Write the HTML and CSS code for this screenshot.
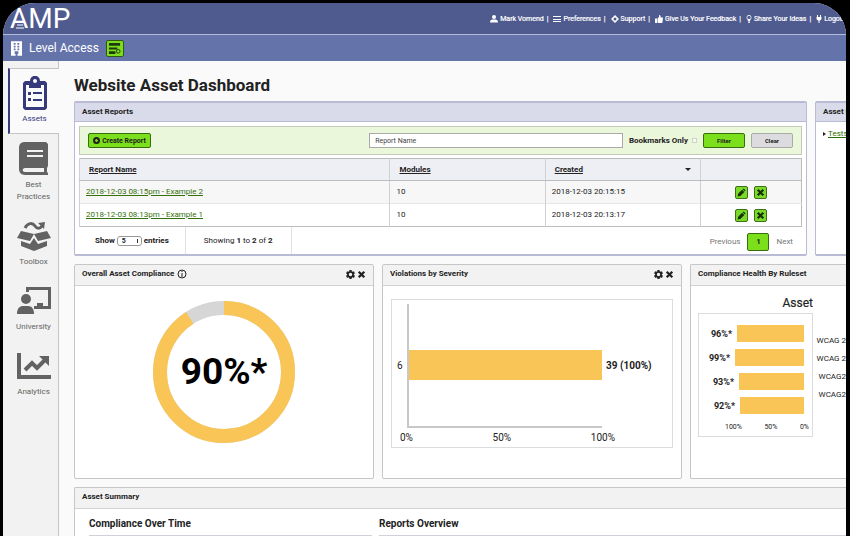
FILE: index.html
```
<!DOCTYPE html>
<html lang="en">
    <head>
        <meta charset="utf-8">
        <title>AMP - Website Asset Dashboard</title>
        <link rel="stylesheet" href="styles.css">
    </head>
    <body>
        <svg class="sprite" width="0" height="0">
            <symbol id="gear" viewBox="0 0 16 16">
                <path fill-rule="evenodd" d="M6 0h4v2l2 1 2-1 2 4-2 1v2l2 1-2 4-2-1-2 1v2H6v-2l-2-1-2 1-2-4 2-1V7L0 6l2-4 2 1 2-1zM8 5a3 3 0 1 0 0 6 3 3 0 0 0 0-6z"/>
            </symbol>
            <symbol id="cross" viewBox="0 0 16 16">
                <path d="M3 3l10 10M13 3L3 13" stroke="currentColor" stroke-width="4"/>
            </symbol>
            <symbol id="pencil" viewBox="0 0 16 16">
                <path d="M1 15l1-5 7-7 4 4-7 7zM10 2l2-1 3 3-1 2z"/>
            </symbol>
        </svg>
        <div class="frame">
            <header class="topbar">
                <div class="logo">AMP
                    <svg viewBox="0 0 8 8"><path d="M2 1h4M1 4h6M0 7h8"/></svg>
                </div>
                <nav class="user-nav">
                    <a href="#"><svg viewBox="0 0 16 16"><circle cx="8" cy="4" r="4"/><path d="M0 15c0-5 3-6 8-6s8 1 8 6z"/></svg>Mark Vomend</a>
                    <a href="#"><svg viewBox="0 0 16 16" shape-rendering="crispEdges"><path d="M0 2h16v2H0zM0 7h16v2H0zM0 12h16v2H0z"/></svg>Preferences</a>
                    <a href="#"><svg viewBox="0 0 16 16"><path fill-rule="evenodd" d="M8 0l3 3 2 2 3 3-3 3-2 2-3 3-3-3-2-2-3-3 3-3 2-2zM8 5a3 3 0 1 0 0 6 3 3 0 0 0 0-6z"/></svg>Support</a>
                    <a href="#"><svg viewBox="0 0 16 16"><path d="M0 7h4v9H0zM5 7l3-3V0c3 0 4 2 3 5h5l-1 10-2 1H7l-2-1z"/></svg>Give Us Your Feedback</a>
                    <a href="#"><svg class="thin" viewBox="0 0 10 16"><path fill-rule="evenodd" d="M5 0a5 5 0 0 1 3 9l-1 3H3L2 9a5 5 0 0 1 3-9zM5 2a3 3 0 0 0-1 6h2a3 3 0 0 0-1-6zM3 13h4v1l-1 2H4l-1-2z"/></svg>Share Your Ideas</a>
                    <a href="#"><svg class="thin" viewBox="0 0 10 16"><path d="M1 0h2v4h4V0h2v4h1v3c0 2-2 4-4 4v5H4v-5c-2 0-4-2-4-4V4h1z"/></svg>Logout</a>
                </nav>
            </header>
            <div class="subbar">
                <svg class="building" viewBox="0 0 12 16"><path fill-rule="evenodd" d="M0 0h12v14h-1H8v-3H4v3H0zM3 2v2h2V2zM7 2v2h2V2zM3 5v2h2V5zM7 5v2h2V5zM3 8v2h2V8zM7 8v2h2V8zM0 14h5v2H0zM7 14h5v2H7z"/></svg>
                <span>Level Access</span>
                <button class="org-button" aria-label="Switch organization">
                    <svg viewBox="0 0 14 14"><path d="M1 1h12v3H1zM1 6h9v2H1zM1 10h7v3H1z"/><circle cx="11" cy="10" r="2" fill="none" stroke="currentColor"/></svg>
                </button>
            </div>
            <div class="body">
                <nav class="sidebar">
                    <a class="side-item active" href="#">
                        <span class="side-icon"><svg width="26" height="34" viewBox="0 0 26 34"><path fill-rule="evenodd" d="M3 5h5c0-7 10-7 10 0h5l2 2v25l-2 2H3l-2-2V7zM4 9v22h18V9h-3v3H7V9zM13 3a2 2 0 1 0 0 4 2 2 0 0 0 0-4z"/><path d="M6 16h3v3H6zM11 16h9v2h-9zM6 22h3v3H6zM11 23h9v2h-9z"/></svg></span>
                        Assets
                    </a>
                    <a class="side-item" href="#">
                        <span class="side-icon"><svg width="30" height="34" viewBox="0 0 30 34"><path fill-rule="evenodd" d="M6 0h21l2 2v22l-1 2v4l1 1v2H6c-4 0-6-3-6-6V6c0-4 2-6 6-6zM8 8v2h16V8zM8 13v2h16v-2zM6 26c-3 0-3 4 0 4h19v-4z"/></svg></span>
                        Best Practices
                    </a>
                    <a class="side-item" href="#">
                        <span class="side-icon"><svg width="34" height="30" viewBox="0 0 34 30"><path d="M8 7c3-6 8-5 10-2s5 3 7 0" fill="none" stroke="currentColor" stroke-width="3"/><path d="M21 2l7-1-1 7zM4 10l13 3-4 7L0 17zM30 10l-13 3 4 7 13-3zM4 20l9 3 4-6 4 6 9-3v5l-13 5-13-5z"/></svg></span>
                        Toolbox
                    </a>
                    <a class="side-item" href="#">
                        <span class="side-icon"><svg width="34" height="28" viewBox="0 0 34 28"><circle cx="9" cy="12" r="5"/><path d="M0 27c0-6 3-8 6-8h5c4 0 6 3 6 8zM9 0h25v22H17v-3h3v-3h6v3h5V3H12v2H9z"/></svg></span>
                        University
                    </a>
                    <a class="side-item" href="#">
                        <span class="side-icon"><svg width="34" height="26" viewBox="0 0 34 26"><path d="M0 0h4v22h30v4H0z"/><path d="M8 17l7-7 5 5 8-8" fill="none" stroke="currentColor" stroke-width="4"/><path d="M22 3h10v10z"/></svg></span>
                        Analytics
                    </a>
                </nav>
                <main class="main">
                    <h1>Website Asset Dashboard</h1>
                    <div class="reports-row">
                        <section class="panel primary">
                            <h2>Asset Reports</h2>
                            <div class="panel-body">
                                <form class="filter-bar">
                                    <button type="button" class="btn green create"><svg viewBox="0 0 16 16"><path fill-rule="evenodd" d="M8 0a8 8 0 1 0 0 16A8 8 0 0 0 8 0zM8 4l2 2 2 2-2 2-2 2-4-4z"/></svg>Create Report</button>
                                    <input type="text" class="report-name" placeholder="Report Name" aria-label="Report Name">
                                    <label class="bookmarks">Bookmarks Only <input type="checkbox"></label>
                                    <button type="button" class="btn green">Filter</button>
                                    <button type="reset" class="btn">Clear</button>
                                </form>
                                <table class="reports">
                                    <colgroup>
                                        <col class="col-name"><col class="col-modules"><col class="col-created"><col>
                                    </colgroup>
                                    <thead>
                                        <tr>
                                            <th><u>Report Name</u></th>
                                            <th><u>Modules</u></th>
                                            <th><div class="sorted"><u>Created</u><i class="caret"></i></div></th>
                                            <th></th>
                                        </tr>
                                    </thead>
                                    <tbody>
                                        <tr>
                                            <td class="name"><a href="#">2018-12-03 08:15pm - Example 2</a></td>
                                            <td>10</td>
                                            <td>2018-12-03 20:15:15</td>
                                            <td>
                                                <div class="actions">
                                                    <button aria-label="Edit"><svg><use href="#pencil"/></svg></button>
                                                    <button aria-label="Delete"><svg><use href="#cross"/></svg></button>
                                                </div>
                                            </td>
                                        </tr>
                                        <tr>
                                            <td class="name"><a href="#">2018-12-03 08:13pm - Example 1</a></td>
                                            <td>10</td>
                                            <td>2018-12-03 20:13:17</td>
                                            <td>
                                                <div class="actions">
                                                    <button aria-label="Edit"><svg><use href="#pencil"/></svg></button>
                                                    <button aria-label="Delete"><svg><use href="#cross"/></svg></button>
                                                </div>
                                            </td>
                                        </tr>
                                    </tbody>
                                </table>
                                <div class="table-footer">
                                    <label class="length">Show <select><option>5</option><option>10</option></select> entries</label>
                                    <div class="info">Showing <b>1</b> to <b>2</b> of <b>2</b></div>
                                    <div class="pager">
                                        <a href="#">Previous</a>
                                        <button class="page">1</button>
                                        <a href="#">Next</a>
                                    </div>
                                </div>
                            </div>
                        </section>
                        <section class="panel primary cut">
                            <h2>Asset Menu</h2>
                            <div class="menu"><i></i><a href="#">Tests</a></div>
                        </section>
                    </div>
                    <div class="widgets">
                        <section class="panel">
                            <h2>Overall Asset Compliance
                                <svg class="info-icon" viewBox="0 0 10 10"><circle cx="5" cy="5" r="4"/><path d="M5 2v1M5 4v4"/></svg>
                                <span class="tools">
                                    <button aria-label="Settings"><svg><use href="#gear"/></svg></button>
                                    <button aria-label="Close"><svg><use href="#cross"/></svg></button>
                                </span>
                            </h2>
                            <div class="donut">
                                <svg viewBox="0 0 142 142">
                                    <circle class="track" cx="71" cy="71" r="64"/>
                                    <circle class="value" cx="71" cy="71" r="64" pathLength="100" stroke-dasharray="91 9"/>
                                </svg>
                                <strong>90%*</strong>
                            </div>
                        </section>
                        <section class="panel">
                            <h2>Violations by Severity
                                <span class="tools">
                                    <button aria-label="Settings"><svg><use href="#gear"/></svg></button>
                                    <button aria-label="Close"><svg><use href="#cross"/></svg></button>
                                </span>
                            </h2>
                            <div class="severity">
                                <div class="plot">
                                    <span>6</span>
                                    <div class="axes"><div class="bar" style="width: 100%"></div></div>
                                    <b>39 (100%)</b>
                                </div>
                                <div class="ticks"><span>0%</span><span>50%</span><span>100%</span></div>
                            </div>
                        </section>
                        <section class="panel cut">
                            <h2>Compliance Health By Ruleset</h2>
                            <div class="ruleset">
                                <div class="ruleset-chart">
                                    <h4>Asset</h4>
                                    <div class="ruleset-box">
                                        <div class="row"><b>96%*</b><div class="bar" style="width: 67px"></div></div>
                                        <div class="row"><b>99%*</b><div class="bar" style="width: 69px"></div></div>
                                        <div class="row"><b>93%*</b><div class="bar" style="width: 65px"></div></div>
                                        <div class="row"><b>92%*</b><div class="bar" style="width: 64px"></div></div>
                                        <div class="ticks"><span>100%</span><span>50%</span><span>0%</span></div>
                                    </div>
                                </div>
                                <ul class="legend">
                                    <li>WCAG 2</li>
                                    <li>WCAG 2</li>
                                    <li>WCAG2</li>
                                    <li>WCAG2</li>
                                </ul>
                            </div>
                        </section>
                    </div>
                    <section class="panel cut summary">
                        <h2>Asset Summary</h2>
                        <div class="summary-body">
                            <div>
                                <h3>Compliance Over Time</h3>
                                <div class="time-chart"></div>
                            </div>
                            <div>
                                <h3>Reports Overview</h3>
                                <table class="overview">
                                    <tr><td></td><td></td><td></td><td></td><td></td><td></td></tr>
                                </table>
                            </div>
                        </div>
                    </section>
                </main>
            </div>
        </div>
    </body>
</html>
```

FILE: styles.css
```
* {
    box-sizing: border-box;
}
body {
    margin: 0;
    height: 100vh;
    padding: 3px 4px 0 3px;
    overflow: hidden;
    background: #000;
    color: #222;
    font: 8px/12px Roboto, Arial, sans-serif;
}
h1, h2, h3, h4 {
    margin: 0;
}
button, input, select {
    margin: 0;
    padding: 0;
    font: inherit;
    color: inherit;
}
svg {
    display: block;
    fill: currentColor;
}
.sprite {
    position: absolute;
}
.frame {
    display: flex;
    flex-direction: column;
    height: 100%;
    overflow: hidden;
    border-radius: 32px 32px 0 0;
    background: #fafafb;
}

/* header */
.topbar {
    display: flex;
    flex: none;
    align-items: center;
    justify-content: space-between;
    height: 32px;
    padding-left: 7px;
    background: #4f5b8f;
    border-bottom: 1px solid #b4bde0;
    color: #fff;
}
.logo {
    position: relative;
    font-size: 28px;
    line-height: 28px;
}
.logo svg {
    position: absolute;
    left: 6px;
    bottom: 4px;
    width: 8px;
    height: 8px;
    stroke: #fff;
}
.user-nav {
    display: flex;
    font-size: 7px;
    white-space: nowrap;
    -webkit-text-stroke: 0.2px;
}
.user-nav a {
    display: flex;
    align-items: center;
    gap: 2px;
    color: #fff;
    text-decoration: none;
}
.user-nav a + a::before {
    content: "|";
    margin: 0 3px;
}
.user-nav svg {
    width: 8px;
    height: 8px;
}
.user-nav svg.thin {
    width: 6px;
}
.subbar {
    display: flex;
    flex: none;
    align-items: center;
    gap: 7px;
    height: 26px;
    padding-left: 8px;
    background: #6573ab;
    color: #fff;
    font-size: 12px;
}
.building {
    width: 11px;
    height: 15px;
}
.org-button {
    display: grid;
    place-items: center;
    width: 18px;
    height: 17px;
    background: #7ddc1f;
    border: 1px solid #2f5a12;
    border-radius: 2px;
    color: #1d3a0c;
}
.org-button svg {
    width: 13px;
    height: 13px;
}

/* sidebar */
.body {
    display: flex;
    flex: 1;
    min-height: 0;
}
.sidebar {
    display: flex;
    flex: none;
    flex-direction: column;
    gap: 16px;
    width: 56px;
    padding: 7px 0 0 5px;
    background: #f2f2f2;
    border-right: 1px solid #c4c4c4;
}
.side-item {
    padding: 0 0 0 1px;
    color: #626262;
    text-align: center;
    text-decoration: none;
}
.side-item.active {
    height: 66px;
    margin: 0 -1px -8px 0;
    padding: 7px 0 0;
    background: #fafafb;
    border: solid #c4c4c4;
    border-width: 1px 0;
    border-left: 2px solid #36397c;
    color: #36397c;
}
.side-icon {
    display: grid;
    place-items: center;
    height: 34px;
    margin-bottom: 3px;
}

/* panels */
.main {
    flex: 1;
    min-width: 0;
    padding: 14px 0 0 15px;
}
h1 {
    margin-bottom: 6px;
    font-size: 17px;
    line-height: 20px;
}
.panel {
    min-width: 0;
    background: #fff;
    border: 1px solid #c6c6c6;
    border-radius: 2px;
}
.panel h2 {
    display: flex;
    align-items: center;
    height: 21px;
    padding: 0 7px 2px;
    background: #f2f2f2;
    border-bottom: 1px solid #d2d2d2;
    font-size: 8px;
    white-space: nowrap;
}
.panel.primary {
    border-color: #b9bad4;
    border-width: 2px 1px;
}
.primary h2 {
    height: 19px;
    padding-bottom: 0;
    background: #dadbea;
    border-color: #b9bad4;
}
.panel.cut {
    border-right: 0;
    border-radius: 2px 0 0 2px;
    overflow: hidden;
}
.reports-row {
    display: grid;
    grid-template-columns: minmax(0, 1fr) 31px;
    gap: 8px;
}
.panel-body {
    padding: 4px 4px 0;
}
.menu {
    display: flex;
    align-items: center;
    gap: 2px;
    padding: 6px 7px;
}
.menu i {
    border: 2px solid transparent;
    border-left: 3px solid #222;
    border-right: 0;
}
.menu a {
    color: #2d7000;
}

/* filter bar */
.filter-bar {
    display: flex;
    align-items: center;
    gap: 6px;
    height: 29px;
    padding: 0 8px;
    background: #eaf7da;
    border: 1px solid #c3c9bb;
}
.btn {
    display: flex;
    align-items: center;
    justify-content: center;
    gap: 2px;
    width: 42px;
    height: 15px;
    background: #dcdcdf;
    border: 1px solid #aaa;
    border-radius: 2px;
    font-size: 6px;
    font-weight: bold;
}
.btn.green {
    background: #7be01b;
    border-color: #376c11;
}
.btn svg {
    width: 7px;
    height: 7px;
}
.btn.create {
    width: 63px;
    margin-right: auto;
    font-size: 7px;
}
.report-name {
    width: 36%;
    height: 15px;
    padding: 0 5px;
    background: #fff;
    border: 1px solid #aaa;
    font-size: 7px;
}
.report-name::placeholder {
    color: #444;
}
.bookmarks {
    display: flex;
    align-items: center;
    gap: 4px;
    font-weight: bold;
}
.bookmarks input {
    width: 5px;
    height: 5px;
    appearance: none;
    background: #f6faf0;
    border: 1px solid #cdd3c6;
}

/* report table */
.reports {
    width: 100%;
    margin-top: 3px;
    table-layout: fixed;
    border-collapse: collapse;
    border: 1px solid #bcbcbc;
}
.col-name {
    width: 43%;
}
.col-modules, .col-created {
    width: 21.5%;
}
.reports th, .reports td {
    height: 23px;
    padding: 0 6px;
    border-left: 1px solid #d0d0d4;
    text-align: left;
}
.reports th {
    height: 22px;
    padding: 0 9px;
    background: #eeeef5;
    border-bottom: 1px solid #bcbcbc;
}
.reports tbody tr:first-child {
    background: #f7f7f7;
    border-bottom: 1px solid #e6e6e6;
}
.reports a {
    color: #356f0c;
}
.sorted {
    display: flex;
    align-items: center;
    justify-content: space-between;
}
.caret {
    border: 3px solid transparent;
    border-top-color: #222;
    border-bottom: 0;
}
.actions {
    display: flex;
    justify-content: center;
    gap: 6px;
}
.actions button {
    display: grid;
    place-items: center;
    width: 13px;
    height: 13px;
    background: #7bd928;
    border: 1px solid #3c7016;
    border-radius: 2px;
    color: #16300a;
}
.actions svg {
    width: 9px;
    height: 9px;
}
.table-footer {
    display: flex;
    height: 27px;
    align-items: stretch;
}
.length, .info {
    display: flex;
    align-items: center;
    gap: 2px;
    padding: 0 16px;
    border-right: 1px solid #e2e2e6;
}
.length {
    font-weight: bold;
}
.info {
    padding: 0 18px;
}
.length select {
    width: 25px;
    height: 10px;
    padding: 0 4px;
    appearance: none;
    background: #fff linear-gradient(#333, #333) no-repeat 19px 2px / 1px 4px;
    border: 1px solid #999;
    border-radius: 3px;
    font-size: 7px;
    line-height: 8px;
}
.pager {
    display: flex;
    align-items: center;
    gap: 7px;
    margin-left: auto;
    padding: 2px 9px 0 0;
}
.pager a {
    color: #777;
    text-decoration: none;
}
.page {
    width: 22px;
    height: 18px;
    background: #7be01b;
    border: 1px solid #376c11;
    border-radius: 2px;
    font-weight: bold;
}

/* widgets */
.widgets {
    display: grid;
    grid-template-columns: minmax(0, 300fr) minmax(0, 300fr) minmax(0, 156fr);
    gap: 8px;
    margin: 8px 0;
    min-height: 215px;
}
.info-icon {
    width: 10px;
    height: 10px;
    margin-left: 3px;
    fill: none;
    stroke: currentColor;
}
.tools {
    display: flex;
    gap: 2px;
    margin-left: auto;
}
.tools button {
    background: none;
    border: 0;
}
.tools svg {
    width: 9px;
    height: 9px;
}
.donut {
    display: grid;
    place-items: center;
    padding-top: 15px;
}
.donut svg, .donut strong {
    grid-area: 1 / 1;
}
.donut svg {
    width: 142px;
    fill: none;
    stroke-width: 14;
    transform: rotate(-90deg);
}
.track {
    stroke: #d6d6d6;
}
.value {
    stroke: #f9c557;
}
.donut strong {
    color: #000;
    font-size: 37px;
    line-height: 40px;
}
.bar {
    background: #f9c557;
}
.severity {
    margin: 13px 8px 0;
    padding-top: 4px;
    height: 149px;
    border: 1px solid #dcdcdc;
    font-size: 10px;
}
.plot {
    display: grid;
    grid-template-columns: 15px minmax(0, 1fr) 70px;
    align-items: center;
    height: 124px;
}
.plot span {
    padding-left: 5px;
}
.plot b {
    padding-left: 4px;
    white-space: nowrap;
}
.axes {
    display: flex;
    align-items: center;
    height: 124px;
    border: solid #c8c8c8;
    border-width: 0 0 2px 2px;
}
.axes .bar {
    height: 30px;
}
.ticks {
    display: flex;
    justify-content: space-between;
}
.severity .ticks {
    margin: 4px 57px 0 8px;
}
.ruleset {
    display: flex;
    padding: 10px 0 0 7px;
}
.ruleset-chart {
    flex: none;
    width: 115px;
}
h4 {
    font-size: 12px;
    font-weight: normal;
    line-height: 14px;
    text-align: right;
    -webkit-text-stroke: 0.2px;
}
.ruleset-box {
    display: flex;
    flex-direction: column;
    gap: 7px;
    height: 124px;
    margin-top: 3px;
    padding: 11px 8px 0;
    border: 1px solid #dcdcdc;
}
.row {
    display: flex;
    align-items: center;
    justify-content: flex-end;
    gap: 5px;
    font-size: 9px;
}
.row .bar {
    height: 17px;
}
.ruleset .ticks {
    padding: 0 0 0 18px;
    margin-right: -5px;
    font-size: 7px;
}
.legend {
    flex: 1;
    margin: 36px 0 0;
    padding: 0;
    list-style: none;
    line-height: 18px;
    text-align: right;
    white-space: nowrap;
}

/* summary */
.summary-body {
    display: grid;
    grid-template-columns: 283px minmax(0, 1fr);
    gap: 7px;
    padding: 8px 0 0 14px;
}
h3 {
    margin-bottom: 4px;
    font-size: 10px;
    line-height: 14px;
}
.time-chart, .overview td {
    height: 20px;
    border: 1px solid #d0d0d8;
}
.overview {
    width: 100%;
    border-collapse: collapse;
}
```
